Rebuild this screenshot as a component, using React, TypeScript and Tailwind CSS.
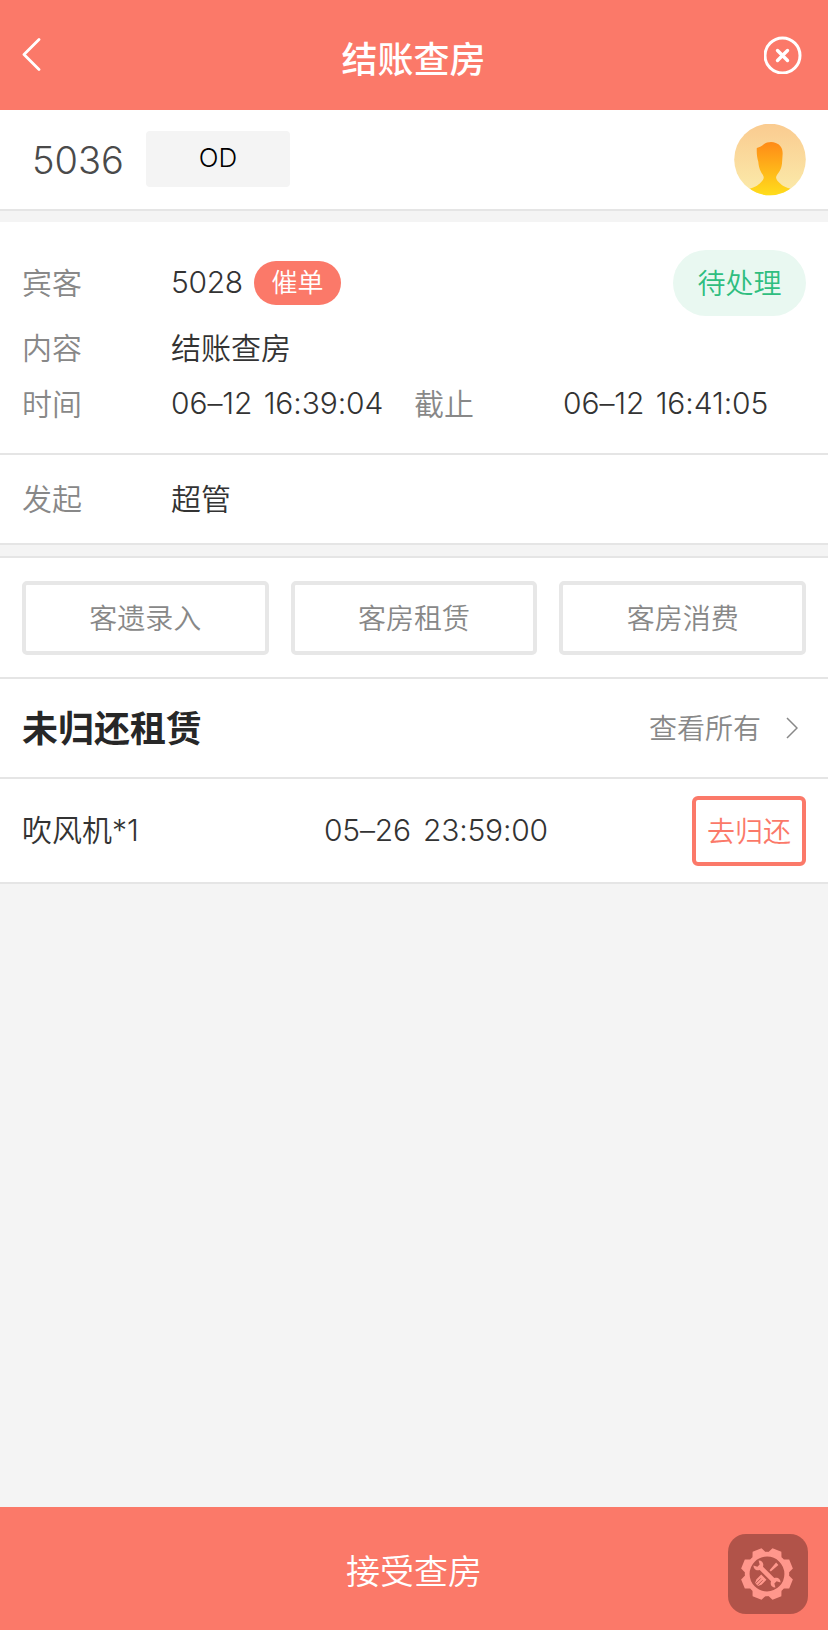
import type { ReactNode } from "react";

const actions = ["客遗录入", "客房租赁", "客房消费"];

function Label({ children }: { children: ReactNode }) {
  return <span className="w-[149px] shrink-0 text-[#888888]">{children}</span>;
}

function Avatar() {
  return (
    <svg className="size-[72px]" viewBox="0 0 72 72">
      <defs>
        <linearGradient id="avatarBg" x1="0" y1="0" x2="0" y2="1">
          <stop offset="0" stopColor="#facb90" />
          <stop offset="1" stopColor="#fbecab" />
        </linearGradient>
        <linearGradient id="avatarMan" x1="0" y1="0" x2="0" y2="1">
          <stop offset="0" stopColor="#ff8a17" />
          <stop offset="1" stopColor="#ffe01c" />
        </linearGradient>
        <clipPath id="avatarClip">
          <circle cx="36" cy="35.5" r="35.800" />
        </clipPath>
      </defs>
      <g clipPath="url(#avatarClip)">
        <rect width="72" height="72" fill="url(#avatarBg)" />
        <path
          fill="url(#avatarMan)"
          d="M22.800 24c3-.8 5-2.200 7-3.800 3-2.200 8-2.900 12-1.300 5 1.800 7.200 6 6.800 11.500l-.5 7.500c-.3 6.500-2.500 9.500-5 12.800-1.600 2.300-1.200 4.200.3 6 4 4.500 6.500 6 12.700 7.800L50 73H22l-6-8.500c5.500-1.500 9-3.500 12.500-8 1.600-2 1.600-3.600.3-5.800-2.300-3.500-4-6.500-4.500-13-1.200-4-1.800-8-1.500-13.700z"
        />
      </g>
    </svg>
  );
}

function GearTool() {
  const teeth = [22.5, 67.5, 112.5, 157.5, 202.5, 247.5, 292.5, 337.5];
  return (
    <svg className="mr-0.5 size-[54px]" viewBox="-27 -27 54 54" fill="#ff978c">
      <circle r="19.800" fill="none" stroke="#ff978c" strokeWidth="4.800" />
      {teeth.map((angle) => (
        <path key={angle} transform={`rotate(${angle})`} d="M-7.200-20.500L-4.800-26h9.600L7.200-20.500z" />
      ))}
      <g transform="rotate(-45)">
        <path d="M-2.300-8v16c-1.900.9-2.900 2.500-2.900 4.200 0 1.300.6 2.500 1.600 3.300l2-3.500h3.200l2 3.500c1-.8 1.600-2 1.600-3.300 0-1.700-1-3.300-2.900-4.200V-8c1.900-.9 2.900-2.500 2.900-4.200 0-1.300-.6-2.500-1.600-3.300l-2 3.500h-3.200l-2-3.500c-1 .8-1.600 2-1.600 3.300 0 1.700 1 3.300 2.900 4.200z" />
      </g>
      <g transform="rotate(45)">
        <path d="M-1.600-14.500h3.200L.9-4.500H-.9zM-3.700 4.500h7.400v7l-1.700 3.300h-4L-3.700 11.500z" />
        <path d="M-1.300 7.500v7.500M1.300 7.500v7.500" stroke="#b15349" strokeWidth=".8" />
      </g>
    </svg>
  );
}

export default function App() {
  return (
    <div className="flex h-[1630px] w-[828px] flex-col overflow-hidden bg-[#f4f4f4] font-[Inter,'Noto_Sans_CJK_SC',sans-serif] text-[30px] leading-none font-[350] text-[#333333]">
      <header className="flex h-[110px] shrink-0 items-center justify-between bg-[#fb7969] pr-[26px] pl-[22px] text-white">
        <svg className="w-[38px] h-[34px]" viewBox="0 0 38 34" fill="none" stroke="currentColor" strokeWidth="2.800" strokeLinecap="round" strokeLinejoin="round">
          <path d="M17 1.500L2 16.500l15 15" />
        </svg>
        <h1 className="pt-2.5 pl-[3px] text-[36px] font-medium">结账查房</h1>
        <svg className="size-[38px]" viewBox="0 0 38 38" fill="none" stroke="currentColor" strokeWidth="3" strokeLinecap="round">
          <circle cx="18.500" cy="19.500" r="17.500" />
          <path d="M13.500 14.500l10 10M23.500 14.500l-10 10" strokeWidth="3.400" />
        </svg>
      </header>

      <section className="flex h-[101px] shrink-0 items-center border-b-2 border-[#e5e5e5] bg-white pr-[22px] pl-[32px]">
        <span className="w-[114px] text-[38px] text-[#4a4a4a]">5036</span>
        <span className="mb-0.5 flex h-14 w-36 items-center justify-center rounded-[4px] bg-[#f4f4f4] pb-0.5 text-[26px] text-black">OD</span>
        <div className="ml-auto">
          <Avatar />
        </div>
      </section>

      <section className="mt-[11px] h-[323px] shrink-0 border-b-2 border-[#e5e5e5] bg-white">
        <div className="h-[233px] border-b-2 border-[#e5e5e5] px-[22px] pt-7">
          <div className="flex h-[66px] items-center">
            <Label>宾客</Label>
            <span className="w-[72px] pb-0.5 tracking-[-0.3px]">5028</span>
            <span className="ml-[11px] flex h-11 w-[87px] items-center justify-center rounded-full bg-[#fb7969] text-[26px] text-white">催单</span>
            <span className="ml-auto flex h-[66px] w-[133px] items-center justify-center rounded-full bg-[#e9f8f1] pt-0.5 text-[28px] text-[#2fbe80]">待处理</span>
          </div>
          <div className="flex h-[66px] items-center pb-0.5">
            <Label>内容</Label>
            <span>结账查房</span>
          </div>
          <div className="flex h-[43px] items-center">
            <Label>时间</Label>
            <span className="w-[243px] pb-px tracking-[-0.1px] [word-spacing:3px]">06–12 16:39:04</span>
            <Label>截止</Label>
            <span className="pb-px tracking-[-0.1px] [word-spacing:3px]">06–12 16:41:05</span>
          </div>
        </div>
        <div className="flex h-[88px] items-center px-[22px]">
          <Label>发起</Label>
          <span>超管</span>
        </div>
      </section>

      <section className="mt-[11px] shrink-0 bg-white">
        <div className="grid h-[123px] grid-cols-3 gap-[22px] border-y-2 border-[#e5e5e5] px-[22px] pt-[23px]">
          {actions.map((name) => (
            <button key={name} className="h-[74px] rounded-[5px] border-4 border-[#e7e7e7] pt-0.5 text-[28px] text-[#888888]">
              {name}
            </button>
          ))}
        </div>
        <div className="flex h-[100px] items-center border-b-2 border-[#e5e5e5] px-[22px]">
          <h2 className="pt-0.5 text-[36px] font-bold text-[#272727]">未归还租赁</h2>
          <span className="ml-auto pt-0.5 text-[28px] text-[#888888]">查看所有</span>
          <svg className="ml-[25px] mr-2 h-[22px] w-3" viewBox="0 0 12 22" fill="none" stroke="#888888" strokeWidth="1.500">
            <path d="M1 1l10 10L1 21" />
          </svg>
        </div>
        <div className="flex h-[105px] items-center border-b-2 border-[#e5e5e5] px-[22px]">
          <span className="w-[302px] pb-px">吹风机*1</span>
          <span className="pb-px tracking-[-0.2px] [word-spacing:4px]">05–26 23:59:00</span>
          <button className="ml-auto h-[70px] w-[114px] rounded-[6px] border-4 border-[#fb7969] pt-0.5 text-[28px] text-[#fb7969]">去归还</button>
        </div>
      </section>

      <footer className="relative mt-auto flex h-[123px] shrink-0 items-center justify-center bg-[#fb7969] pt-1.5 text-[34px] text-white">
        接受查房
        <button className="absolute right-5 bottom-4 flex size-20 items-center justify-center rounded-[18px] bg-[#b15349]">
          <GearTool />
        </button>
      </footer>
    </div>
  );
}
